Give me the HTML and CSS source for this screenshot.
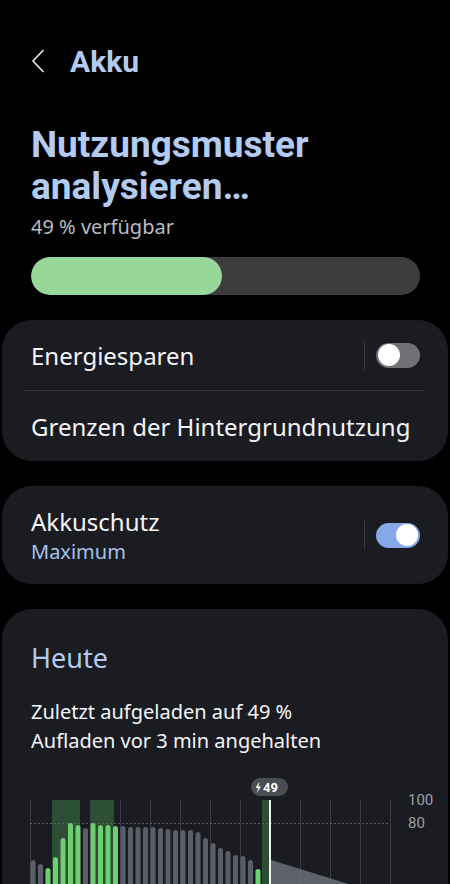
FILE: index.html
```html
<html>
  <head>
    <title>Akku</title>
    <link rel="stylesheet" href="styles.css">
  </head>
  <body>
    <div class="topbar">
      <svg class="back" width="14" height="24" viewBox="0 0 14 24">
        <path d="M12 1.5 L2 12 L12 22.5" fill="none" stroke="#e6e8ee" stroke-width="1.7" stroke-linecap="round" stroke-linejoin="round"/>
      </svg>
      <h1 class="page-title">Akku</h1>
    </div>

    <div class="summary">
      <h2 class="status">Nutzungsmuster analysieren…</h2>
      <p class="available">49 % verfügbar</p>
      <div class="level-track">
        <div class="level-fill" style="width: 49%"></div>
      </div>
    </div>

    <div class="card">
      <div class="row">
        <span class="row-label">Energiesparen</span>
        <span class="sep"></span>
        <span class="switch"><span class="knob"></span></span>
      </div>
      <div class="divider"></div>
      <div class="row row-single">
        <span class="row-label">Grenzen der Hintergrundnutzung</span>
      </div>
    </div>

    <div class="card">
      <div class="row row-double">
        <div class="row-text">
          <span class="row-label">Akkuschutz</span>
          <span class="row-sub">Maximum</span>
        </div>
        <span class="sep sep-tall"></span>
        <span class="switch switch-on"><span class="knob"></span></span>
      </div>
    </div>

    <div class="card card-today">
      <h3 class="today">Heute</h3>
      <p class="charge-info">Zuletzt aufgeladen auf 49 %<br>Aufladen vor 3 min angehalten</p>
      <svg class="chart" width="446" height="140" viewBox="2 775 446 140">
        <g fill="#3c7a43" opacity="0.55">
          <rect x="52" y="801" width="28" height="120"/>
          <rect x="90" y="801" width="24" height="120"/>
          <rect x="262" y="801" width="8" height="120"/>
        </g>
        <g stroke="#3a3d46" stroke-width="1">
          <line x1="30.5" y1="801" x2="30.5" y2="915"/>
          <line x1="60.5" y1="801" x2="60.5" y2="915"/>
          <line x1="90.5" y1="801" x2="90.5" y2="915"/>
          <line x1="120.5" y1="801" x2="120.5" y2="915"/>
          <line x1="150.5" y1="801" x2="150.5" y2="915"/>
          <line x1="180.5" y1="801" x2="180.5" y2="915"/>
          <line x1="210.5" y1="801" x2="210.5" y2="915"/>
          <line x1="240.5" y1="801" x2="240.5" y2="915"/>
          <line x1="300.5" y1="801" x2="300.5" y2="915"/>
          <line x1="330.5" y1="801" x2="330.5" y2="915"/>
          <line x1="360.5" y1="801" x2="360.5" y2="915"/>
          <line x1="390.5" y1="801" x2="390.5" y2="915"/>
        </g>
        <line x1="30" y1="824.5" x2="390" y2="824.5" stroke="#5c5f68" stroke-width="1" stroke-dasharray="2 2"/>
        <polygon points="271,861 420,907 271,907" fill="#6a6e78" opacity="0.85"/>
        <g id="bars"></g>
        <rect x="269" y="801" width="2" height="120" fill="#f2f2f2"/>
        <rect x="251" y="779" width="37" height="18" rx="9" fill="#4b4d54"/>
        <path d="M259.5 782.5 L255.5 789 L258.3 789 L256.8 794 L261 787.4 L258.3 787.4 Z" fill="#ffffff"/>
        <text x="263" y="793" class="badge-text">49</text>
        <text x="408" y="806" class="axis-text">100</text>
        <text x="408" y="829" class="axis-text">80</text>
      </svg>
    </div>

    <script>
      // battery level per slot: [top y, charging]
      const slots = [
        [861, 0], [865, 0], [869, 1], [858, 1], [839, 1], [824, 1], [826, 1],
        [829, 0], [824, 1], [826, 1], [826, 1], [827, 1], [827, 0], [828, 0],
        [828, 0], [828, 0], [828, 0], [829, 0], [830, 0], [831, 0], [831, 0],
        [831, 0], [833, 0], [839, 0], [844, 0], [849, 0], [852, 0], [856, 0],
        [857, 0], [861, 0], [870, 1]
      ];
      const bars = document.getElementById("bars");
      slots.forEach((slot, i) => {
        const r = document.createElementNS("http://www.w3.org/2000/svg", "rect");
        r.setAttribute("x", 30.5 + i * 7.5);
        r.setAttribute("y", slot[0]);
        r.setAttribute("width", 5);
        r.setAttribute("height", 915 - slot[0]);
        r.setAttribute("rx", 2.5);
        r.setAttribute("fill", slot[1] ? "#6dcf70" : "#5b5e67");
        bars.appendChild(r);
      });
    </script>
  </body>
</html>
```

FILE: styles.css
```css
body,
html {
  background-color: #000;
  margin: 0;
  padding: 0;
  font-family: "Noto Sans", Roboto, sans-serif;
  color: #f4f5f7;
}

body {
  overflow: hidden;
  height: 884px;
}

.topbar {
  display: flex;
  align-items: center;
  height: 48px;
  margin-top: 37px;
  padding-left: 31px;
}

.back {
  display: block;
}

.page-title {
  margin: 0 0 0 25px;
  font-family: Roboto, sans-serif;
  font-size: 30px;
  font-weight: 700;
  color: #b3cbf1;
}

.summary {
  padding: 39px 30px 0 31px;
}

.status {
  margin: 0;
  font-family: Roboto, sans-serif;
  font-size: 37px;
  line-height: 42px;
  font-weight: 700;
  color: #b3cbf1;
}

.available {
  margin: 6px 0 0 0;
  font-size: 20px;
  line-height: 26px;
  color: #b9bcc4;
}

.level-track {
  margin-top: 17px;
  height: 38px;
  border-radius: 19px;
  background-color: #3d3d3e;
  overflow: hidden;
}

.level-fill {
  height: 100%;
  border-radius: 19px;
  background-color: #97d89a;
}

.card {
  margin: 25px 2px 0 2px;
  border-radius: 30px;
  background-color: #1a1c22;
}

.row {
  display: flex;
  align-items: center;
  padding: 0 28px 0 29px;
  height: 70px;
}

.row-single {
  height: 70px;
}

.row-double {
  height: 98px;
}

.row-label {
  font-size: 24px;
  flex: 1;
}

.row-text {
  display: flex;
  flex-direction: column;
  flex: 1;
}

.row-sub {
  font-size: 20px;
  line-height: 26px;
  color: #a6c1ec;
  margin-top: 1px;
}

.sep {
  width: 1px;
  height: 29px;
  background-color: #3a3c44;
  margin-right: 11px;
}

.switch {
  position: relative;
  width: 44px;
  height: 25px;
  border-radius: 13px;
  background-color: #707076;
}

.switch .knob {
  position: absolute;
  top: 1.5px;
  left: 2px;
  width: 22px;
  height: 22px;
  border-radius: 50%;
  background-color: #fff;
}

.switch-on {
  background-color: #84a8e8;
}

.switch-on .knob {
  left: auto;
  right: 2px;
}

.divider {
  height: 1px;
  margin: 0 23px;
  background-color: #363841;
}

.today {
  margin: 0;
  padding: 30px 0 0 29px;
  font-size: 27px;
  line-height: 38px;
  font-weight: 400;
  color: #b3cbf1;
}

.charge-info {
  margin: 20px 0 0 29px;
  font-size: 20px;
  line-height: 29px;
}

.chart {
  display: block;
  margin-top: 19px;
}

.badge-text {
  font-family: Roboto, sans-serif;
  font-size: 13px;
  font-weight: 700;
  fill: #fff;
}

.axis-text {
  font-family: Roboto, sans-serif;
  font-size: 15px;
  fill: #9c9fa6;
}
```
